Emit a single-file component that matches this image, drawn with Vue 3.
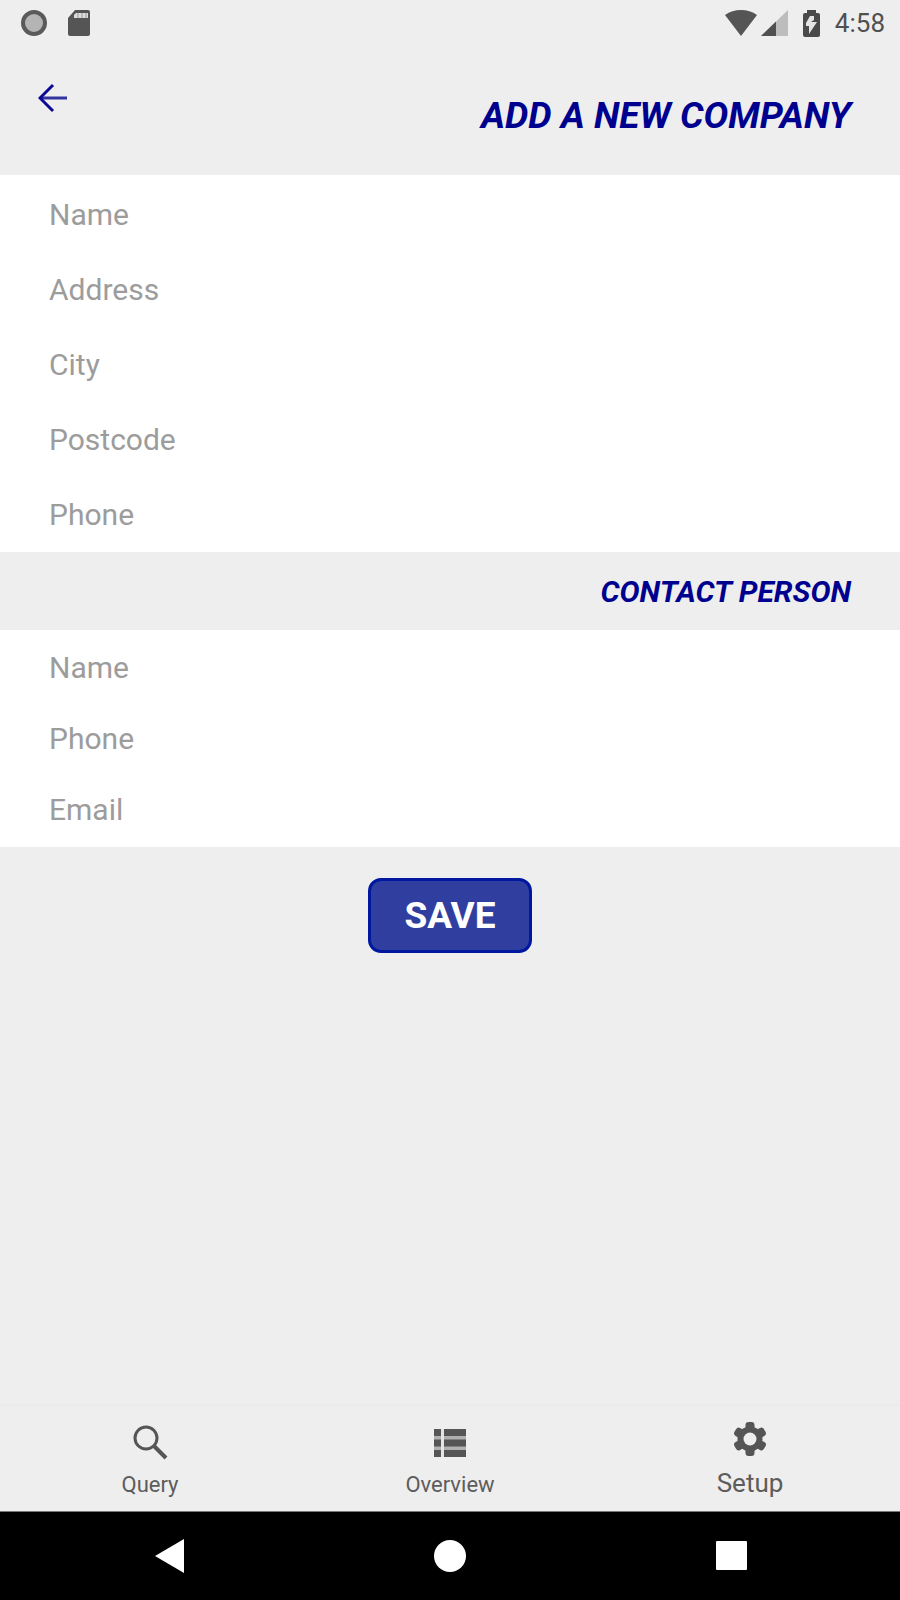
<script setup>
import { reactive } from 'vue'

const company = reactive({ name: '', address: '', city: '', postcode: '', phone: '' })
const contact = reactive({ name: '', phone: '', email: '' })

const companyFields = [
  { key: 'name', label: 'Name' },
  { key: 'address', label: 'Address' },
  { key: 'city', label: 'City' },
  { key: 'postcode', label: 'Postcode' },
  { key: 'phone', label: 'Phone' },
]
const contactFields = [
  { key: 'name', label: 'Name' },
  { key: 'phone', label: 'Phone' },
  { key: 'email', label: 'Email' },
]
</script>

<template>
  <div class="screen">
    <div class="status">
      <div class="status-group left">
        <svg width="28" height="28" viewBox="0 0 28 28" aria-hidden="true">
          <circle cx="14" cy="14" r="11" fill="#b4b4b4" stroke="#5a5a5a" stroke-width="4" />
        </svg>
        <svg width="22" height="26" viewBox="0 0 22 26" aria-hidden="true">
          <path d="M7 0h13q2 0 2 2v22q0 2-2 2H2q-2 0-2-2V8z" fill="#555" />
          <path d="M8 3h12v5H6V5z" fill="#dcdcdc" />
          <path d="M10 3v5M14 3v5M18 3v5" stroke="#999" stroke-width="1" />
        </svg>
      </div>
      <div class="status-group right">
        <svg width="32" height="26" viewBox="0 0 32 26" aria-hidden="true">
          <path d="M0 5Q7 0 16 0t16 5L16 26z" fill="#555" />
        </svg>
        <svg class="signal" width="27" height="26" viewBox="0 0 27 26" aria-hidden="true">
          <path d="M27 0v26H0z" fill="#bdbdbd" />
          <path d="M15 11.6V26H0z" fill="#505050" />
        </svg>
        <svg class="battery" width="17" height="27" viewBox="0 0 17 27" aria-hidden="true">
          <path d="M4 0h9v3h2q2 0 2 2v20q0 2-2 2H2q-2 0-2-2V5q0-2 2-2h2z" fill="#4a4a4a" />
          <path d="M11 6v6h3L6 24v-8H3V6z" fill="#e4e4e4" />
          <path d="M3 6h4l-4 7zM8 12h3v-2z" fill="#4a4a4a" />
        </svg>
        <span class="time">4:58</span>
      </div>
    </div>

    <header class="header">
      <button class="back" type="button" aria-label="Back">
        <svg width="30" height="30" viewBox="0 0 30 30" fill="none" aria-hidden="true">
          <path d="M29 15H2" stroke="#3434a0" stroke-width="3" />
          <path d="M15 2L2 15l13 13" stroke="#0a0a96" stroke-width="3" />
        </svg>
      </button>
      <h1>ADD A NEW COMPANY</h1>
    </header>

    <form class="form" @submit.prevent>
      <div class="group">
        <input
          v-for="f in companyFields"
          :key="f.key"
          v-model="company[f.key]"
          class="field"
          type="text"
          :placeholder="f.label"
          :aria-label="f.label"
        />
      </div>
      <h2>CONTACT PERSON</h2>
      <div class="group compact">
        <input
          v-for="f in contactFields"
          :key="f.key"
          v-model="contact[f.key]"
          class="field"
          type="text"
          :placeholder="f.label"
          :aria-label="'Contact ' + f.label"
        />
      </div>
      <button class="save" type="submit">SAVE</button>
    </form>

    <nav class="tabs">
      <a class="tab" href="#query">
        <svg width="36" height="36" viewBox="0 0 36 36" fill="none" stroke="#555" aria-hidden="true">
          <circle cx="14" cy="13" r="11" stroke-width="3" />
          <path d="M22 21l12 12" stroke-width="4" />
        </svg>
        <span>Query</span>
      </a>
      <a class="tab" href="#overview">
        <svg width="36" height="36" viewBox="0 0 36 36" aria-hidden="true">
          <path d="M2 4h32v28H2z" fill="#b0b0b0" />
          <path d="M9 4h3v28H9z" fill="#e4e4e4" />
          <path d="M2 4h7v7H2zM2 14.500h7v7H2zM2 25h7v7H2zM12 4h22v7H12zM12 14.500h22v7H12zM12 25h22v7H12z" fill="#555" />
        </svg>
        <span>Overview</span>
      </a>
      <a class="tab large" href="#setup">
        <svg width="36" height="36" viewBox="0 0 36 36" aria-hidden="true">
          <g fill="#555">
            <rect v-for="a in [0, 60, 120]" :key="a" x="13.500" y="1" width="9" height="34" rx="3" :transform="`rotate(${a} 18 18)`" />
            <circle cx="18" cy="18" r="12.500" />
          </g>
          <circle cx="18" cy="18" r="6.500" fill="#eee" />
        </svg>
        <span>Setup</span>
      </a>
    </nav>

    <div class="system">
      <button type="button" aria-label="System back">
        <svg width="36" height="36" viewBox="0 0 36 36" aria-hidden="true"><path d="M3 18L32 1v34z" fill="#fff" /></svg>
      </button>
      <button type="button" aria-label="Home">
        <svg width="36" height="36" viewBox="0 0 36 36" aria-hidden="true"><circle cx="18" cy="18" r="16" fill="#fff" /></svg>
      </button>
      <button type="button" aria-label="Recent apps">
        <svg width="36" height="36" viewBox="0 0 36 36" aria-hidden="true"><rect x="4" y="3" width="31" height="29" rx="1" fill="#fff" /></svg>
      </button>
    </div>
  </div>
</template>

<style>
body {
  margin: 0;
  background: #eee;
}
</style>

<style scoped>
.screen {
  display: flex;
  flex-direction: column;
  min-height: 100vh;
  background: #eee;
  font-family: Roboto, "Liberation Sans", sans-serif;
}
.screen * {
  box-sizing: border-box;
}
svg {
  display: block;
}
button {
  font-family: inherit;
  cursor: pointer;
}
.status {
  display: flex;
  justify-content: space-between;
  height: 48px;
  padding: 0 15px 2px 20px;
}
.status-group {
  display: flex;
  align-items: center;
}
.left {
  gap: 20px;
}
.signal {
  margin-left: 4px;
}
.battery {
  margin: 0 15px;
}
.time {
  color: #505050;
  font-size: 26px;
  line-height: 32px;
}
.header {
  display: flex;
  justify-content: space-between;
  align-items: flex-start;
  height: 127px;
  padding: 35px 49px 0 38px;
}
.back {
  padding: 0;
  border: 0;
  background: none;
}
h1,
h2 {
  margin: 0;
  color: #00008f;
  font-weight: 700;
  font-style: italic;
}
h1 {
  padding-top: 11px;
  font-size: 37px;
  line-height: 44px;
}
h2 {
  padding: 1px 49px 0;
  font-size: 30px;
  line-height: 77px;
  text-align: right;
}
.form {
  display: flex;
  flex: 1;
  flex-direction: column;
}
.group {
  display: flex;
  flex-direction: column;
  padding: 2px 0 0;
  background: #fff;
}
.field {
  width: 100%;
  height: 75px;
  padding: 0 49px;
  border: 0;
  outline: 0;
  background: transparent;
  color: #333;
  font-family: inherit;
  font-size: 30px;
}
.field::placeholder {
  color: #9c9c9c;
  opacity: 1;
}
.compact {
  padding-bottom: 2px;
}
.compact .field {
  height: 71px;
}
.save {
  align-self: center;
  margin: 31px 0;
  padding: 0 33px;
  border: 3px solid #0018a0;
  border-radius: 13px;
  background: #303f9f;
  color: #fff;
  font-size: 37px;
  font-weight: 700;
  line-height: 69px;
}
.tabs {
  display: grid;
  grid-template-columns: repeat(3, 1fr);
  height: 107px;
  border-top: 2px solid #ebebeb;
}
.tab {
  display: flex;
  flex-direction: column;
  align-items: center;
  gap: 10px;
  padding-top: 19px;
  color: #5c5c5c;
  font-size: 22px;
  line-height: 28px;
  text-decoration: none;
}
.large {
  padding-top: 15px;
  gap: 12px;
  font-size: 26px;
}
.system {
  display: grid;
  grid-template-columns: repeat(3, 1fr);
  align-items: center;
  height: 89px;
  padding: 0 30px;
  border-top: 1px solid #777;
  background: #000;
}
.system button {
  justify-self: center;
  padding: 0;
  border: 0;
  background: none;
}
</style>
